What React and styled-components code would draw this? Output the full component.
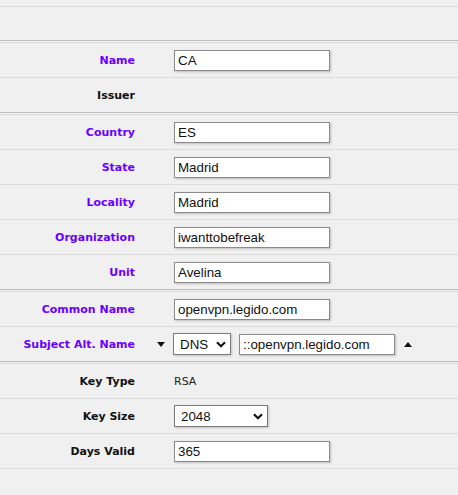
import styled, { createGlobalStyle } from 'styled-components'

const GlobalStyle = createGlobalStyle`
	html, body {
		margin: 0;
		padding: 0;
		background: #f0f0f0;
		font-family: 'DejaVu Sans', Verdana, sans-serif;
	}
`

const subject = [
	{ label: 'Country', value: 'ES' },
	{ label: 'State', value: 'Madrid' },
	{ label: 'Locality', value: 'Madrid' },
	{ label: 'Organization', value: 'iwanttobefreak' },
	{ label: 'Unit', value: 'Avelina' },
]

const Chevron = () => (
	<svg width="10" height="7" viewBox="0 0 10 7">
		<path d="M1 1.2 L5 5.2 L9 1.2" fill="none" stroke="#111" strokeWidth="2.2" />
	</svg>
)

const App = () => {
	return (
		<Page>
			<GlobalStyle />
			<TopBar />
			<BlankRow />
			<Section>
				<Row>
					<Label $required>Name</Label>
					<Spacer />
					<TextInput defaultValue="CA" />
				</Row>
				<Row>
					<Label>Issuer</Label>
					<Spacer />
					<span />
				</Row>
			</Section>
			<Section>
				{subject.map((field) => (
					<Row key={field.label}>
						<Label $required>{field.label}</Label>
						<Spacer />
						<TextInput defaultValue={field.value} />
					</Row>
				))}
			</Section>
			<Section>
				<Row>
					<Label $required>Common Name</Label>
					<Spacer />
					<TextInput defaultValue="openvpn.legido.com" />
				</Row>
				<Row>
					<Label $required>Subject Alt. Name</Label>
					<Spacer>
						<Triangle $dir="down" />
					</Spacer>
					<Controls>
						<SelectWrap $width={58}>
							<Select defaultValue="DNS">
								<option>DNS</option>
								<option>IP</option>
								<option>email</option>
								<option>URI</option>
							</Select>
							<ChevronBox>
								<Chevron />
							</ChevronBox>
						</SelectWrap>
						<TextInput defaultValue="::openvpn.legido.com" />
						<Triangle $dir="up" />
					</Controls>
				</Row>
			</Section>
			<Section>
				<Row>
					<Label>Key Type</Label>
					<Spacer />
					<Value>RSA</Value>
				</Row>
				<Row>
					<Label>Key Size</Label>
					<Spacer />
					<SelectWrap $width={94}>
						<Select defaultValue="2048">
							<option>1024</option>
							<option>2048</option>
							<option>4096</option>
						</Select>
						<ChevronBox>
							<Chevron />
						</ChevronBox>
					</SelectWrap>
				</Row>
				<Row>
					<Label>Days Valid</Label>
					<Spacer />
					<TextInput defaultValue="365" />
				</Row>
				<EndLine />
			</Section>
		</Page>
	)
}

export default App

const Page = styled.div`
	width: 100%;
	min-height: 495px;
	background: #f0f0f0;
`

const TopBar = styled.div`
	height: 6px;
`

const BlankRow = styled.div`
	height: 33px;
	border-top: 1px solid #dcdcdc;
`

const Section = styled.div`
	border-top: 1px solid #bdbdbd;
	padding-top: 1px;
`

const Row = styled.div`
	display: grid;
	grid-template-columns: 135px 39px 1fr;
	align-items: center;
	height: 34px;
	border-top: 1px solid #dcdcdc;
`

const EndLine = styled.div`
	border-top: 1px solid #dcdcdc;
`

const Label = styled.div`
	text-align: right;
	font-weight: bold;
	font-size: 11px;
	padding-top: 1px;
	color: ${(p) => (p.$required ? '#6a00ff' : '#111')};
`

const Spacer = styled.div`
	display: flex;
	align-items: center;
	padding-left: 22px;
`

const Controls = styled.div`
	display: flex;
	align-items: center;
	gap: 8px;
	margin-left: -1px;
`

const TextInput = styled.input`
	box-sizing: border-box;
	width: 156px;
	height: 21px;
	margin: 1px 0 0;
	padding: 0 3px;
	border: 1px solid #8a8a8a;
	background: #fff;
	box-shadow: 1px 1px 2px rgba(0, 0, 0, 0.22);
	font-family: 'Liberation Sans', Arial, sans-serif;
	font-size: 13.33px;
	color: #111;
	outline: none;
`

const SelectWrap = styled.div`
	position: relative;
	width: ${(p) => p.$width}px;
	height: 22px;
`

const Select = styled.select`
	box-sizing: border-box;
	width: 100%;
	height: 100%;
	margin: 0;
	padding: 0 0 0 6px;
	appearance: none;
	border: 1px solid #7a7a7a;
	border-radius: 0;
	background: #fff;
	box-shadow: 1px 1px 2px rgba(0, 0, 0, 0.2);
	font-family: 'Liberation Sans', Arial, sans-serif;
	font-size: 13.33px;
	color: #111;
	outline: none;
`

const ChevronBox = styled.span`
	position: absolute;
	right: 5px;
	top: 8px;
	display: flex;
	pointer-events: none;
`

const Triangle = styled.span`
	width: 0;
	height: 0;
	border-left: 4.5px solid transparent;
	border-right: 4.5px solid transparent;
	${(p) =>
		p.$dir === 'down'
			? 'border-top: 5px solid #111;'
			: 'border-bottom: 5px solid #111; margin-left: 1px;'}
`

const Value = styled.span`
	font-size: 11px;
	color: #222;
`
